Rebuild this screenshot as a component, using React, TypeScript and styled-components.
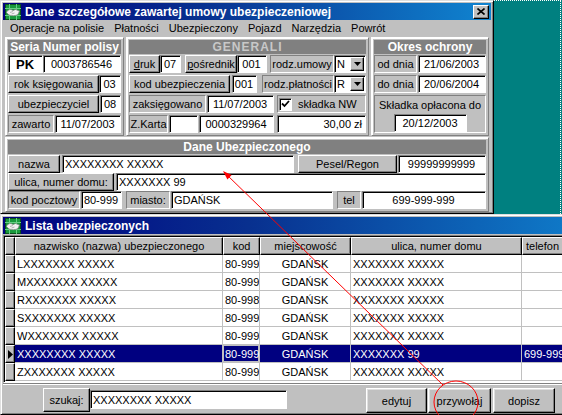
import React from "react";
import styled, { createGlobalStyle, css } from "styled-components";

const GlobalStyle = createGlobalStyle`
  html, body {
    margin: 0;
    padding: 0;
    background: #008080;
  }
  body {
    font-family: "Liberation Sans", Arial, sans-serif;
    font-size: 11px;
    color: #000;
  }
  *, *::before, *::after {
    box-sizing: border-box;
  }
`;

const raised = css`
  border: 1px solid;
  border-color: #fff #000 #000 #fff;
  box-shadow: inset -1px -1px #808080;
`;

const sunken = css`
  border: 1px solid;
  border-color: #808080 #fff #fff #808080;
  box-shadow: inset 1px 1px #000;
`;

const etched = css`
  border: 1px solid;
  border-color: #808080 #fff #fff #808080;
`;

const Desktop = styled.div`
  position: relative;
  width: 562px;
  height: 415px;
  overflow: hidden;
  background: #008080;
  display: flex;
  flex-direction: column;
`;

const Marquee = styled.div`
  position: absolute;
  top: 0;
  left: 494px;
  right: 1px;
  height: 214px;
  border-top: 1px dotted #fff;
  border-right: 1px dotted #fff;
`;

const Window = styled.div<{ $w: number; $h: number }>`
  flex-shrink: 0;
  width: ${(p) => p.$w}px;
  height: ${(p) => p.$h}px;
  background: #c0c0c0;
  border: 1px solid;
  border-color: #dfdfdf #000 #000 #dfdfdf;
  box-shadow: inset 1px 1px #fff, inset -1px -1px #808080;
  padding: 2px;
  display: flex;
  flex-direction: column;
`;

const TitleBar = styled.div`
  flex-shrink: 0;
  height: 17px;
  display: flex;
  align-items: center;
  gap: 4px;
  padding: 0 2px;
  background: linear-gradient(90deg, #000080 0%, #08308f 40%, #1084d0 100%);
  color: #fff;
  font-size: 12px;
  font-weight: bold;
  white-space: nowrap;
`;

const TitleText = styled.span`
  flex: 1;
`;

const CloseBtn = styled.div`
  width: 16px;
  height: 14px;
  background: #c0c0c0;
  ${raised};
  display: flex;
  align-items: center;
  justify-content: center;
`;

const MenuBar = styled.div`
  flex-shrink: 0;
  height: 16px;
  display: flex;
  align-items: center;
  padding-left: 2px;
`;

const MenuItem = styled.span`
  padding: 0 5px;
`;

const FormBody = styled.div`
  flex: 1;
  display: flex;
  flex-direction: column;
  gap: 1px;
  padding: 1px 2px 0;
`;

const TopRow = styled.div`
  display: flex;
  gap: 2px;
  height: 99px;
`;

const Group = styled.div<{ $w?: number }>`
  ${(p) => (p.$w ? `width: ${p.$w}px;` : "flex: 1;")}
  flex-shrink: 0;
  border: 1px solid;
  border-color: #fff #808080 #808080 #fff;
  box-shadow: 1px 1px 0 #fff inset;
  padding: 2px 2px 2px 2px;
  display: flex;
  flex-direction: column;
`;

const GroupHeader = styled.div<{ $dim?: boolean }>`
  flex-shrink: 0;
  height: 14px;
  background: #808080;
  color: ${(p) => (p.$dim ? "#c8c8c8" : "#fff")};
  font-size: 12px;
  font-weight: bold;
  letter-spacing: ${(p) => (p.$dim ? "1px" : "0")};
  display: flex;
  align-items: center;
  justify-content: center;
  white-space: nowrap;
`;

const Rows = styled.div<{ $gap: number }>`
  display: flex;
  flex-direction: column;
  gap: ${(p) => p.$gap}px;
  padding-top: 1px;
`;

const Row = styled.div<{ $h: number }>`
  display: flex;
  height: ${(p) => p.$h}px;
`;

const Btn = styled.div<{ $w?: number; $ml?: number }>`
  ${(p) => (p.$w ? `width: ${p.$w}px;` : "flex: 1;")}
  margin-left: ${(p) => p.$ml ?? 0}px;
  flex-shrink: 0;
  background: #c0c0c0;
  ${raised};
  display: flex;
  align-items: center;
  justify-content: center;
  white-space: nowrap;
  overflow: hidden;
`;

const Static = styled.div<{ $w?: number; $ml?: number }>`
  ${(p) => (p.$w ? `width: ${p.$w}px;` : "flex: 1;")}
  margin-left: ${(p) => p.$ml ?? 0}px;
  flex-shrink: 0;
  min-width: 0;
  background: #c0c0c0;
  ${etched};
  display: flex;
  align-items: center;
  justify-content: center;
  white-space: nowrap;
  overflow: hidden;
`;

const Field = styled.div<{
  $w?: number;
  $ml?: number;
  $align?: "left" | "center" | "right";
  $bold?: boolean;
}>`
  ${(p) => (p.$w ? `width: ${p.$w}px;` : "flex: 1;")}
  margin-left: ${(p) => p.$ml ?? 0}px;
  flex-shrink: 0;
  min-width: 0;
  background: #fff;
  ${sunken};
  display: flex;
  align-items: center;
  justify-content: ${(p) =>
    p.$align === "left" ? "flex-start" : p.$align === "right" ? "flex-end" : "center"};
  padding: 0 3px 0 2px;
  font-weight: ${(p) => (p.$bold ? "bold" : "normal")};
  font-size: ${(p) => (p.$bold ? "13px" : "11px")};
  white-space: nowrap;
  overflow: hidden;
`;

const Combo = styled.div<{ $w: number }>`
  width: ${(p) => p.$w}px;
  flex-shrink: 0;
  background: #fff;
  ${sunken};
  display: flex;
  padding: 1px 1px 1px 2px;
`;

const ComboValue = styled.span`
  flex: 1;
  display: flex;
  align-items: center;
`;

const DropBtn = styled.div`
  width: 14px;
  background: #c0c0c0;
  ${raised};
  display: flex;
  align-items: center;
  justify-content: center;
`;

const CheckArea = styled.div<{ $ml: number }>`
  flex: 1;
  margin-left: ${(p) => p.$ml}px;
  background: #c0c0c0;
  ${etched};
  display: flex;
  align-items: center;
  gap: 6px;
  padding-left: 1px;
`;

const CheckBox = styled.div`
  width: 13px;
  height: 13px;
  background: #fff;
  ${sunken};
  display: flex;
  align-items: center;
  justify-content: center;
`;

const Key = styled.span`
  text-decoration: underline;
`;

const PaidBox = styled.div`
  flex: 1;
  height: 38px;
  background: #c0c0c0;
  ${etched};
  display: flex;
  flex-direction: column;
  align-items: center;
  gap: 3px;
  padding-top: 3px;
`;

const PaidDate = styled.div`
  width: 73px;
  height: 18px;
  background: #fff;
  ${sunken};
  display: flex;
  align-items: center;
  justify-content: center;
`;

const Table = styled.div`
  margin-top: 1px;
  border: 1px solid;
  border-color: #808080 #fff #fff #808080;
  box-shadow: inset 1px 1px #000;
  padding: 1px 0 1px 1px;
  background: #fff;
  display: grid;
  grid-template-columns: 10px 208px 37px 91px 171px 120px;
  grid-auto-rows: 18px;
`;

const HeadCell = styled.div<{ $align?: "left" | "center" }>`
  background: #c0c0c0;
  ${raised};
  display: flex;
  align-items: center;
  justify-content: ${(p) => (p.$align === "left" ? "flex-start" : "center")};
  padding-left: ${(p) => (p.$align === "left" ? "3px" : "0")};
  white-space: nowrap;
  overflow: hidden;
`;

const Indicator = styled.div`
  background: #c0c0c0;
  ${raised};
  display: flex;
  align-items: center;
  justify-content: center;
`;

const Cell = styled.div<{ $sel?: boolean; $align?: "left" | "center"; $focus?: boolean }>`
  background: ${(p) => (p.$sel ? "#000080" : "#fff")};
  color: ${(p) => (p.$sel ? "#fff" : "#000")};
  border-right: 1px solid #c0c0c0;
  border-bottom: 1px solid #c0c0c0;
  box-shadow: ${(p) => (p.$focus ? "inset 0 0 0 1px #c0c0c0" : "none")};
  display: flex;
  align-items: center;
  justify-content: ${(p) => (p.$align === "center" ? "center" : "flex-start")};
  padding-left: ${(p) => (p.$align === "center" ? "0" : "2px")};
  white-space: nowrap;
  overflow: hidden;
`;

const Footer = styled.div`
  height: 29px;
  flex-shrink: 0;
  display: flex;
  align-items: flex-start;
  padding: 4px 0 0 40px;
  border-top: 1px solid #808080;
  box-shadow: inset 0 1px #fff;
`;

const SearchBtn = styled(Btn)`
  height: 24px;
`;

const SearchField = styled(Field)`
  height: 19px;
  margin-top: 2px;
`;

const ActionBtn = styled(Btn)`
  height: 25px;
  box-shadow: inset -1px -1px #808080, inset 1px 1px #dfdfdf;
`;

const Annot = styled.svg`
  position: absolute;
  left: 0;
  top: 0;
  pointer-events: none;
`;

const AppIcon = () => (
  <svg width="16" height="16" viewBox="0 0 16 16">
    <rect x="0.5" y="0.5" width="15" height="15" fill="#189a3c" stroke="#0a4f1c" />
    <path d="M0 4.5H16M0 11.5H16M4.5 0V16M11.5 0V16" stroke="#66d083" />
    <path
      d="M1.5 8.5C3 5 6 5 8 6.5L10.5 5.5L14.5 7L13 10.5C10.5 12 7 12 4 11Z"
      fill="#f2f2f2"
      stroke="#7a7a7a"
      strokeWidth="0.7"
    />
    <path d="M5 8.5L8 7.5M6.5 10L9.5 9" stroke="#9a9a9a" strokeWidth="0.7" />
  </svg>
);

const CloseGlyph = () => (
  <svg width="8" height="7" viewBox="0 0 8 7">
    <path d="M0.5 0.5L7.5 6.5M7.5 0.5L0.5 6.5" stroke="#000" strokeWidth="1.6" />
  </svg>
);

const DownArrow = () => (
  <svg width="7" height="4" viewBox="0 0 7 4">
    <path d="M0 0H7L3.5 4Z" fill="#000" />
  </svg>
);

const RowArrow = () => (
  <svg width="5" height="9" viewBox="0 0 5 9">
    <path d="M0 0L5 4.5L0 9Z" fill="#000" />
  </svg>
);

const Tick = () => (
  <svg width="9" height="8" viewBox="0 0 9 8">
    <path d="M1 3.5L3.5 6L8 1" fill="none" stroke="#000" strokeWidth="1.8" />
  </svg>
);

interface Person {
  name: string;
  kod: string;
  city: string;
  street: string;
  tel: string;
}

const people: Person[] = [
  { name: "LXXXXXXX XXXXX", kod: "80-999", city: "GDAŃSK", street: "XXXXXXX XXXXX", tel: "" },
  { name: "MXXXXXXX XXXXX", kod: "80-999", city: "GDAŃSK", street: "XXXXXXX XXXXX", tel: "" },
  { name: "RXXXXXXX XXXXX", kod: "80-998", city: "GDAŃSK", street: "XXXXXXX XXXXX", tel: "" },
  { name: "SXXXXXXX XXXXX", kod: "80-999", city: "GDAŃSK", street: "XXXXXXX XXXXX", tel: "" },
  { name: "WXXXXXXX XXXXX", kod: "80-999", city: "GDAŃSK", street: "XXXXXXX XXXXX", tel: "" },
  { name: "XXXXXXXX XXXXX", kod: "80-999", city: "GDAŃSK", street: "XXXXXXX 99", tel: "699-999-999" },
  { name: "ZXXXXXXX XXXXX", kod: "80-999", city: "GDAŃSK", street: "XXXXXXX XXXXX", tel: "" },
];

const selected = 5;

export default function App() {
  return (
    <Desktop>
      <GlobalStyle />
      <Marquee />

      <Window $w={494} $h={214}>
        <TitleBar>
          <AppIcon />
          <TitleText>Dane szczegółowe zawartej umowy ubezpieczeniowej</TitleText>
          <CloseBtn>
            <CloseGlyph />
          </CloseBtn>
        </TitleBar>
        <MenuBar>
          <MenuItem>Operacje na polisie</MenuItem>
          <MenuItem>Płatności</MenuItem>
          <MenuItem>Ubezpieczony</MenuItem>
          <MenuItem>Pojazd</MenuItem>
          <MenuItem>Narzędzia</MenuItem>
          <MenuItem>Powrót</MenuItem>
        </MenuBar>

        <FormBody>
          <TopRow>
            <Group $w={119}>
              <GroupHeader>Seria Numer polisy</GroupHeader>
              <Rows $gap={2}>
                <Row $h={18}>
                  <Field $w={35} $bold>PK</Field>
                  <Field>0003786546</Field>
                </Row>
                <Row $h={18}>
                  <Btn $w={91}>rok księgowania</Btn>
                  <Field>03</Field>
                </Row>
                <Row $h={18}>
                  <Btn $w={91}>ubezpieczyciel</Btn>
                  <Field $ml={1}>08</Field>
                </Row>
                <Row $h={18}>
                  <Static $w={46}>zawarto</Static>
                  <Field $ml={1}>11/07/2003</Field>
                </Row>
              </Rows>
            </Group>

            <Group $w={243}>
              <GroupHeader $dim>GENERALI</GroupHeader>
              <Rows $gap={2}>
                <Row $h={18}>
                  <Btn $w={31}>
                    <Key>d</Key>ruk
                  </Btn>
                  <Field $w={21}>07</Field>
                  <Btn $w={52} $ml={4}>
                    <Key>p</Key>ośrednik
                  </Btn>
                  <Field $w={30}>001</Field>
                  <Static $ml={3}>rodz.umowy</Static>
                  <Combo $w={32}>
                    <ComboValue>N</ComboValue>
                    <DropBtn>
                      <DownArrow />
                    </DropBtn>
                  </Combo>
                </Row>
                <Row $h={18}>
                  <Btn $w={101}>kod ubezpieczenia</Btn>
                  <Field $w={25} $ml={2}>001</Field>
                  <Static $ml={5}>rodz.płatności</Static>
                  <Combo $w={32}>
                    <ComboValue>R</ComboValue>
                    <DropBtn>
                      <DownArrow />
                    </DropBtn>
                  </Combo>
                </Row>
                <Row $h={18}>
                  <Static $w={77}>zaksięgowano</Static>
                  <Field $w={67} $ml={1}>11/07/2003</Field>
                  <CheckArea $ml={3}>
                    <CheckBox>
                      <Tick />
                    </CheckBox>
                    składka NW
                  </CheckArea>
                </Row>
                <Row $h={18}>
                  <Static $w={39}>Z.Karta</Static>
                  <Field $w={29} $ml={1} />
                  <Field $w={75} $ml={1}>0000329964</Field>
                  <Field $ml={3} $align="right">30,00 zł</Field>
                </Row>
              </Rows>
            </Group>

            <Group>
              <GroupHeader>Okres ochrony</GroupHeader>
              <Rows $gap={2}>
                <Row $h={18}>
                  <Static $w={43}>od dnia</Static>
                  <Field $ml={1}>21/06/2003</Field>
                </Row>
                <Row $h={18}>
                  <Static $w={43}>do dnia</Static>
                  <Field $ml={1}>20/06/2004</Field>
                </Row>
                <PaidBox>
                  Składka opłacona do
                  <PaidDate>20/12/2003</PaidDate>
                </PaidBox>
              </Rows>
            </Group>
          </TopRow>

          <Group>
            <GroupHeader>Dane Ubezpieczonego</GroupHeader>
            <Rows $gap={0}>
              <Row $h={18}>
                <Btn $w={52}>nazwa</Btn>
                <Field $w={232} $ml={2} $align="left">
                  XXXXXXXX XXXXX
                </Field>
                <Btn $w={99} $ml={4}>Pesel/Regon</Btn>
                <Field $ml={1}>99999999999</Field>
              </Row>
              <Row $h={18}>
                <Btn $w={106}>ulica, numer domu:</Btn>
                <Field $ml={2} $align="left">
                  XXXXXXX 99
                </Field>
              </Row>
              <Row $h={18}>
                <Static $w={72}>kod pocztowy</Static>
                <Field $w={41} $ml={1}>80-999</Field>
                <Static $w={44} $ml={4}>miasto:</Static>
                <Field $w={162} $ml={1} $align="left">
                  GDAŃSK
                </Field>
                <Static $w={24} $ml={4}>tel</Static>
                <Field $ml={1}>699-999-999</Field>
              </Row>
            </Rows>
          </Group>
        </FormBody>
      </Window>

      <Window $w={620} $h={201}>
        <TitleBar>
          <AppIcon />
          <TitleText>Lista ubezpieczonych</TitleText>
        </TitleBar>
        <Table>
          <HeadCell />
          <HeadCell>nazwisko (nazwa) ubezpieczonego</HeadCell>
          <HeadCell>kod</HeadCell>
          <HeadCell>miejscowość</HeadCell>
          <HeadCell>ulica, numer domu</HeadCell>
          <HeadCell $align="left">telefon</HeadCell>
          {people.map((p, i) => {
            const sel = i === selected;
            return (
              <React.Fragment key={p.name}>
                <Indicator>{sel ? <RowArrow /> : null}</Indicator>
                <Cell $sel={sel}>{p.name}</Cell>
                <Cell $sel={sel} $focus={sel}>
                  {p.kod}
                </Cell>
                <Cell $sel={sel} $align="center">
                  {p.city}
                </Cell>
                <Cell $sel={sel}>{p.street}</Cell>
                <Cell $sel={sel}>{p.tel}</Cell>
              </React.Fragment>
            );
          })}
        </Table>
        <Footer>
          <SearchBtn $w={47}>szukaj:</SearchBtn>
          <SearchField $w={197} $align="left">
            XXXXXXXX XXXXX
          </SearchField>
          <ActionBtn $w={61} $ml={79}>edytuj</ActionBtn>
          <ActionBtn $w={63} $ml={1}>przywołaj</ActionBtn>
          <ActionBtn $w={62} $ml={2}>dopisz</ActionBtn>
        </Footer>
      </Window>

      <Annot width="562" height="415" viewBox="0 0 562 415">
        <line x1="226" y1="174" x2="443" y2="385" stroke="#ff0000" strokeWidth="1" />
        <polygon points="223,171 231.6,175.1 227.4,179.4" fill="#ff0000" />
        <ellipse cx="456" cy="402" rx="22" ry="21" fill="none" stroke="#ff0000" strokeWidth="1" />
      </Annot>
    </Desktop>
  );
}
